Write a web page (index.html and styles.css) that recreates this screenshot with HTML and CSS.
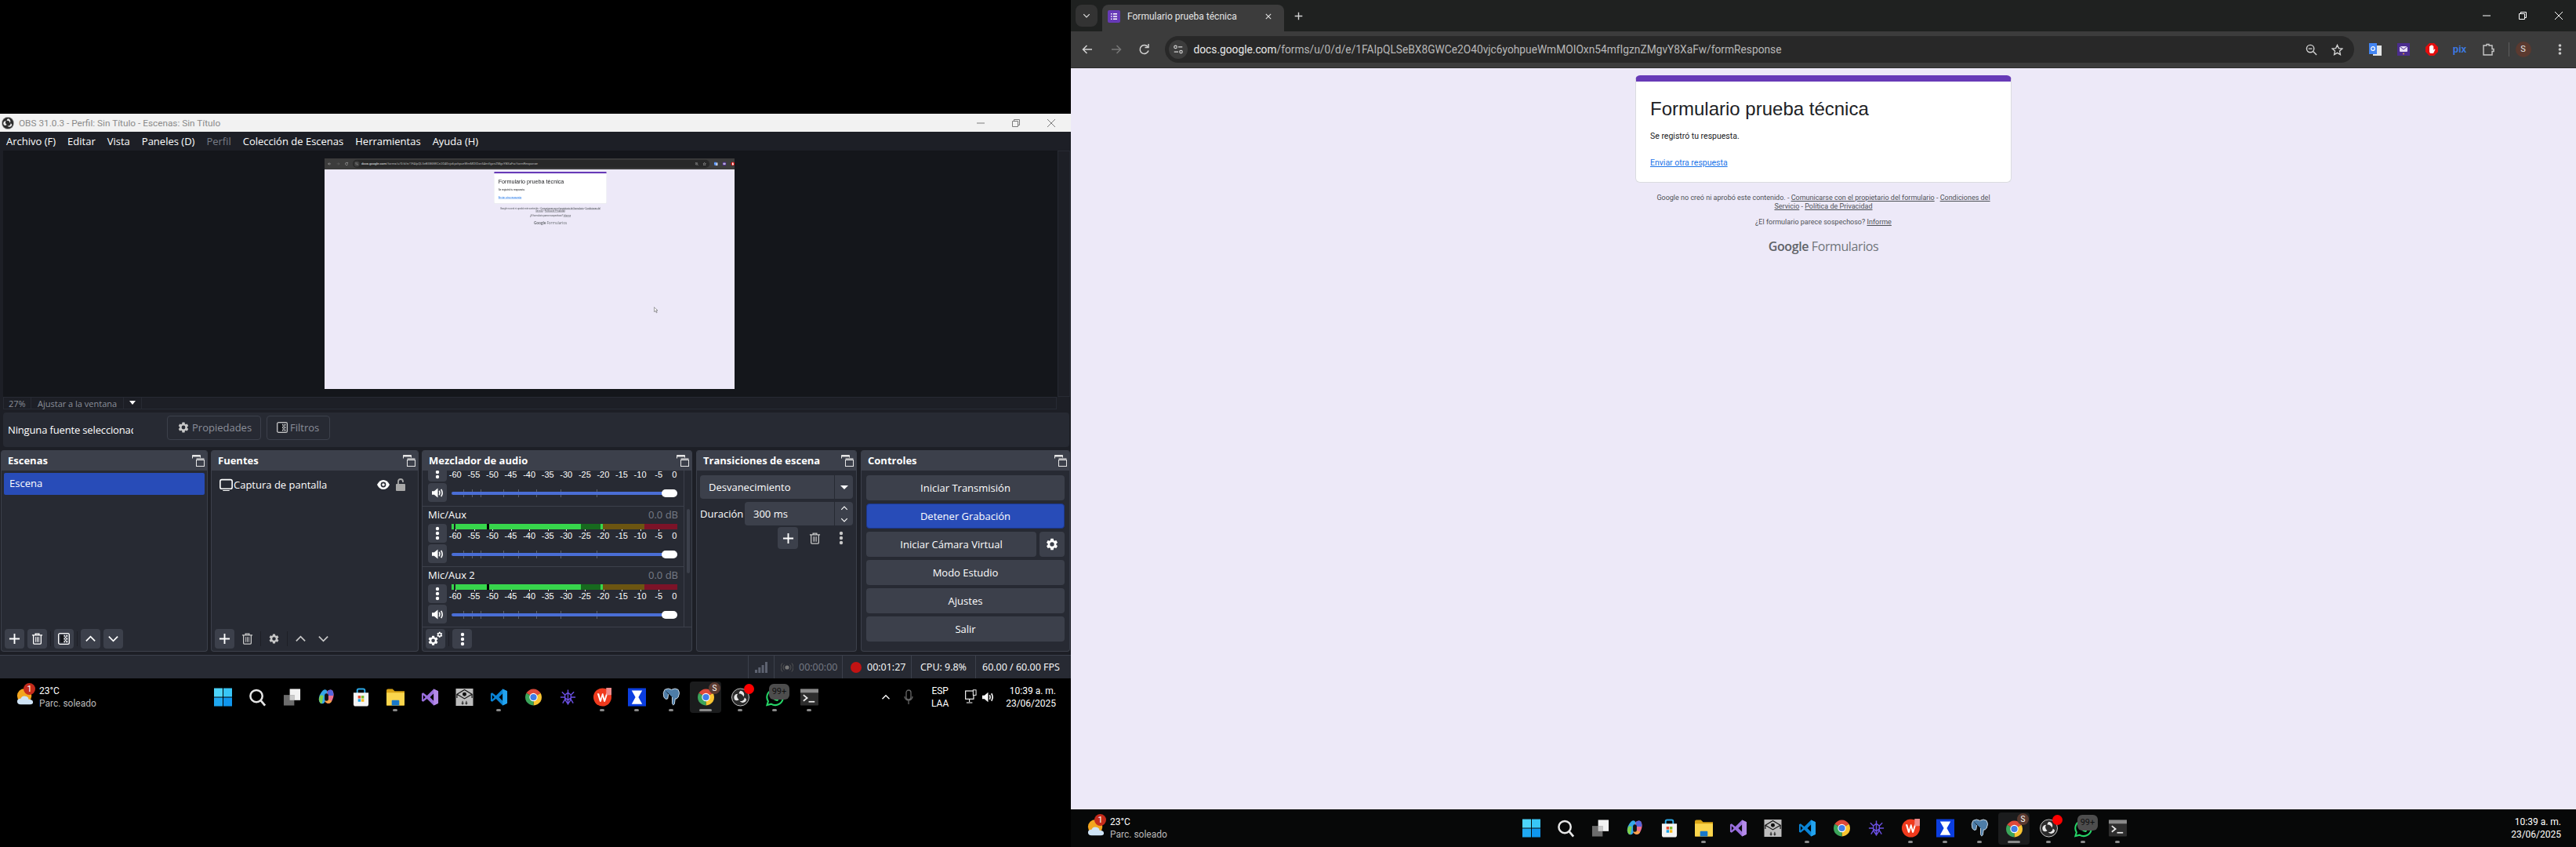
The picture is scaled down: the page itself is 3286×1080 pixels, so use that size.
FILE: index.html
```html
<!DOCTYPE html>
<html lang="es">
<head>
  <meta charset="UTF-8" />
  <title>OBS y Formulario prueba técnica</title>
  <link rel="stylesheet" href="styles.css">
</head>
<body>
  <svg class="sprites" width="0" height="0">
    <symbol id="i-gear" viewBox="0 0 24 24"><path fill="currentColor" d="M19.14 12.94c.04-.3.06-.61.06-.94 0-.32-.02-.64-.07-.94l2.03-1.58a.49.49 0 0 0 .12-.61l-1.92-3.32a.49.49 0 0 0-.59-.22l-2.39.96c-.5-.38-1.03-.7-1.62-.94l-.36-2.54a.48.48 0 0 0-.48-.41h-3.84a.48.48 0 0 0-.47.41l-.36 2.54c-.59.24-1.13.57-1.62.94l-2.39-.96a.49.49 0 0 0-.59.22L2.74 8.87c-.12.21-.08.47.12.61l2.03 1.58c-.05.3-.09.63-.09.94s.02.64.07.94l-2.03 1.58a.49.49 0 0 0-.12.61l1.92 3.32c.12.22.37.29.59.22l2.39-.96c.5.38 1.03.7 1.62.94l.36 2.54c.05.24.24.41.48.41h3.84c.24 0 .44-.17.47-.41l.36-2.54c.59-.24 1.13-.56 1.62-.94l2.39.96c.22.08.47 0 .59-.22l1.92-3.32c.12-.22.07-.47-.12-.61l-2.01-1.58zM12 15.6A3.6 3.6 0 1 1 12 8.4a3.6 3.6 0 0 1 0 7.2z"/></symbol>
    <symbol id="i-dock" viewBox="0 0 16 16"><g fill="none" stroke="currentColor"><path d="M.5 5.5v-4h10v3"/><path d="M.5 2.5h10" stroke-width="2"/><rect x="5.5" y="7.5" width="10" height="8"/><path d="M5.5 5h10v3h-10z" fill="currentColor" stroke="none" opacity=".6"/></g></symbol>
    <symbol id="i-plus" viewBox="0 0 16 16"><path d="M8 1v14M1 8h14" stroke="currentColor" stroke-width="2"/></symbol>
    <symbol id="i-trash" viewBox="0 0 16 16"><g fill="none" stroke="currentColor" stroke-width="1.4"><path d="M1 3h14M5.5 3V1.2h5V3M2.8 3v10.8q0 1.2 1.2 1.2h8q1.2 0 1.2-1.2V3"/><path d="M6 5.5v7M8 5.5v7M10 5.5v7" stroke-width="1"/></g></symbol>
    <symbol id="i-filter" viewBox="0 0 16 16"><rect x=".7" y=".7" width="14.6" height="14.6" rx="2" fill="none" stroke="currentColor" stroke-width="1.4"/><path d="M3 3h5v10H3z" fill="#14161b"/><path d="M8 3h1.5v2H8zM9.5 5H11v2H9.5zM8 7h1.5v2H8zM9.5 9H11v2H9.5zM8 11h1.5v2H8zM11 3h2v2h-2zM11 7h2v2h-2zM11 11h2v2h-2z" fill="currentColor"/></symbol>
    <symbol id="i-up" viewBox="0 0 16 16"><path d="M2 11l6-6 6 6" fill="none" stroke="currentColor" stroke-width="1.8"/></symbol>
    <symbol id="i-down" viewBox="0 0 16 16"><path d="M2 5l6 6 6-6" fill="none" stroke="currentColor" stroke-width="1.8"/></symbol>
    <symbol id="i-dots" viewBox="0 0 6 18"><circle cx="3" cy="3" r="2.2" fill="currentColor"/><circle cx="3" cy="9" r="2.2" fill="currentColor"/><circle cx="3" cy="15" r="2.2" fill="currentColor"/></symbol>
    <symbol id="i-speaker" viewBox="0 0 18 16"><path d="M1 5.5h3L9 1.5v13l-5-4H1z" fill="currentColor"/><path d="M11 5q1.6 3 0 6M13.5 3q3 5 0 10" fill="none" stroke="currentColor" stroke-width="1.7"/></symbol>
    <symbol id="i-gears" viewBox="0 0 24 24"><g transform="translate(0 6) scale(.72)"><use href="#i-gear"/></g><g transform="translate(13 1) scale(.42)"><use href="#i-gear"/></g></symbol>
    <symbol id="i-slider" viewBox="0 0 288 14"><path d="M15.500 2v10M26.500 2v10M37.500 2v10M66.500 2v10M85.500 2v10M108.500 2v10M139.500 2v10M185.500 2v10" stroke="#5d6270"/><rect y="5" width="288" height="4" rx="2" fill="#4a6ed6"/><rect x="268" y="2" width="20" height="10" rx="5" fill="#fff"/></symbol>
    <symbol id="i-obs" viewBox="0 0 24 24"><circle cx="12" cy="12" r="11.500" fill="#2b2b2b" stroke="#c9c9c9"/><path d="M12 3.500a5 5 0 0 1 4 8 5 5 0 0 0-6-4 4.500 4.500 0 0 1 2-4zM20 15.500a5 5 0 0 1-9 1.500 5 5 0 0 0 6.500-4.500 4.500 4.500 0 0 1 2.500 3zM4 15a5 5 0 0 1 4.500-7.500A5 5 0 0 0 10 15a4.500 4.500 0 0 1-6 0z" fill="#e8e8e8"/></symbol>
    <symbol id="i-win" viewBox="0 0 24 24"><path d="M0 0h11.500v11.500H0z" fill="#4dd4fb"/><path d="M12.500 0H24v11.500H12.500z" fill="#38c6f8"/><path d="M0 12.500h11.500V24H0z" fill="#1fa8f2"/><path d="M12.500 12.500H24V24H12.500z" fill="#0f96ee"/></symbol>
    <symbol id="i-search" viewBox="0 0 24 24"><circle cx="10.500" cy="10.500" r="8" fill="none" stroke="#e6e6e6" stroke-width="2.600"/><path d="M16.500 16.500L22 23" stroke="#e6e6e6" stroke-width="2.800"/></symbol>
    <symbol id="i-tasks" viewBox="0 0 24 24"><rect x="9" y="1" width="14" height="15" fill="#f2f2f2"/><rect x="1" y="9" width="14" height="14" fill="#6c6c6c"/><rect x="9" y="9" width="6" height="7" fill="#c9c9c9"/></symbol>
    <symbol id="i-copilot" viewBox="0 0 24 24"><path d="M7 3q4-3 6 1l-3 14q-2 4-6 2Q0 16 3 9q2-4 4-6z" fill="#35a7e8"/><path d="M4 20Q0 15 4 9l4 1-2 10z" fill="#7fd14a"/><path d="M13 4q3-3 7-1 3 5 0 12-2 5-5 5-2 1-5-2l3-14z" fill="#ee6f8f"/><path d="M13 4q4-3 7-1 2 4 1 7l-7 0z" fill="#5664dd"/><path d="M10 18q3 3 5 2 3 0 4-3l-6-3z" fill="#f8a14a"/><rect x="9.500" y="7" width="5" height="10" rx="2.400" fill="#111"/></symbol>
    <symbol id="i-store" viewBox="0 0 24 24"><path d="M7 7V3q0-2 2-2h6q2 0 2 2v4" fill="none" stroke="#2aa7e6" stroke-width="2"/><path d="M2 6h20v15q0 3-3 3H5q-3 0-3-3z" fill="#f4f4f4"/><path d="M8 10h3.600v3.600H8z" fill="#e8492f"/><path d="M12.400 10H16v3.600h-3.600z" fill="#7db927"/><path d="M8 14.400h3.600V18H8z" fill="#19a3ea"/><path d="M12.400 14.400H16V18h-3.600z" fill="#fbb917"/></symbol>
    <symbol id="i-folder" viewBox="0 0 24 24"><path d="M0 3q0-2 2-2h6l3 3h13v19H0z" fill="#d9a415"/><path d="M0 6h24v16q0 1-1 1H1q-1 0-1-1z" fill="#fbd64d"/><path d="M7 17q0-1 1-1h8q1 0 1 1v6H7z" fill="#1878c9"/></symbol>
    <symbol id="i-vs" viewBox="0 0 24 24"><path d="M17 1l6 3v16l-6 3-9-9-5 4-2-1V7l2-1 5 4zM17 7l-5 5 5 5zM3 9v6l3-3z" fill="#9a6fdd"/><path d="M17 1l6 3v16l-6 3z" fill="#b48ae8"/></symbol>
    <symbol id="i-iis" viewBox="0 0 24 24"><rect x=".5" y=".5" width="23" height="23" fill="#bdbdbd"/><path d="M2 8l10-6 10 6-10 6zM2 8v5M22 8v5" fill="none" stroke="#111" stroke-width="1.200"/><circle cx="12" cy="8" r="2.600" fill="#111"/><path d="M8 20h3M13 20h3M9.500 17v5M14.500 17v5" stroke="#111"/></symbol>
    <symbol id="i-vscode" viewBox="0 0 24 24"><path d="M17 1l6 3v16l-6 3-9-9-5 4-2-1V7l2-1 5 4z" fill="#0a84d6"/><path d="M17 7l-5 5 5 5zM3 9v6l3-3z" fill="#000"/><path d="M17 1l6 3v16l-6 3z" fill="#23a3ee"/></symbol>
    <symbol id="i-chrome" viewBox="0 0 24 24"><path d="M12 12L2.500 6.500A11 11 0 0 1 21.500 6.500z" fill="#de4a3a"/><path d="M12 12l9.500-5.500A11 11 0 0 1 12 23z" fill="#fbc531"/><path d="M12 12v11A11 11 0 0 1 2.500 6.500z" fill="#3ba55a"/><circle cx="12" cy="12" r="5.400" fill="#fff"/><circle cx="12" cy="12" r="4.300" fill="#3f7de8"/></symbol>
    <symbol id="i-net" viewBox="0 0 24 24"><g fill="none" stroke="#6a4fe0" stroke-width="1.500"><path d="M12 2v20M4 5l4 4 4-3 4 3 4-4M2 12h5l5 4 5-4h5M5 20l3-5 4 6 4-6 3 5M8 9v6M16 9v6"/></g></symbol>
    <symbol id="i-wps" viewBox="0 0 24 24"><circle cx="12" cy="12" r="12" fill="#ef3a1d"/><path d="M5 7h2.500l2 7 2-7h1.400l2 7 2-7H19l-3.400 11h-1.800L12 11.500 10.200 18H8.400z" fill="#fff"/><rect x="17" y="-1" width="8" height="10" rx="1" fill="#f08a8a"/></symbol>
    <symbol id="i-hourglass" viewBox="0 0 24 24"><rect width="24" height="24" fill="#0b3ee0"/><path d="M5 3h14l-5 9 5 9H5l5-9z" fill="#fff"/></symbol>
    <symbol id="i-pg" viewBox="0 0 24 24"><path d="M3 2q5-3 9 0 5-3 9 0 3 4 0 10-2 3-4 2l-1 7q-2 3-3-1V12M3 2q-3 4-1 10 2 4 5 2l1-6" fill="#4d7da8" stroke="#cfdbe6" stroke-width="1"/></symbol>
    <symbol id="i-wa" viewBox="0 0 24 24"><path d="M12 1.500a10.500 10.500 0 0 0-9 16L1.500 22.500 7 21A10.500 10.500 0 1 0 12 1.500z" fill="#000" stroke="#25d366" stroke-width="2.200"/><path d="M8 7q-2 3 1 7 4 4 7 3l1-2-3-2-1 1q-3-1-4-4l1-1-1-3z" fill="#25d366"/></symbol>
    <symbol id="i-term" viewBox="0 0 24 24"><rect y="1" width="24" height="22" rx="1" fill="#2e2e2e"/><rect y="1" width="24" height="5" fill="#8a8a8a"/><path d="M4 9l5 4-5 4" fill="none" stroke="#e8e8e8" stroke-width="1.800"/><path d="M11 18h8" stroke="#e8e8e8" stroke-width="1.800"/></symbol>
    <symbol id="i-weather" viewBox="0 0 24 24"><circle cx="11" cy="10" r="10" fill="#f3a51f"/><path d="M6 22q-5 0-5-4t5-4q2-5 8-3 3 1 3 4 6 0 6 4 0 3-4 3z" fill="#cfe3f5"/></symbol>
    <symbol id="i-back" viewBox="0 0 16 16"><path d="M14 8H2.500M7.500 3l-5 5 5 5" fill="none" stroke="currentColor" stroke-width="1.500"/></symbol>
    <symbol id="i-forward" viewBox="0 0 16 16"><path d="M2 8h11.500M8.500 3l5 5-5 5" fill="none" stroke="currentColor" stroke-width="1.500"/></symbol>
    <symbol id="i-reload" viewBox="0 0 16 16"><path d="M13 9.500A5.500 5.500 0 1 1 12 4.500" fill="none" stroke="currentColor" stroke-width="1.500"/><path d="M13 1v4.500H8.500" fill="none" stroke="currentColor" stroke-width="1.500"/></symbol>
    <symbol id="i-tune" viewBox="0 0 16 16"><g fill="none" stroke="currentColor" stroke-width="1.300"><circle cx="4" cy="4.500" r="2"/><path d="M8 4.500h6M2 11.500h6"/><circle cx="12" cy="11.500" r="2"/></g></symbol>
    <symbol id="i-zoomout" viewBox="0 0 16 16"><circle cx="6.500" cy="6.500" r="5" fill="none" stroke="currentColor" stroke-width="1.500"/><path d="M10.500 10.500L15 15M4 6.500h5" stroke="currentColor" stroke-width="1.500"/></symbol>
    <symbol id="i-star" viewBox="0 0 16 16"><path d="M8 1.500l2 4.500 4.800.5-3.600 3.200 1 4.800L8 12.100l-4.200 2.400 1-4.800L1.200 6.500 6 6z" fill="none" stroke="currentColor" stroke-width="1.400"/></symbol>
    <symbol id="i-translate" viewBox="0 0 16 16"><rect x="5" y="3" width="11" height="13" fill="#e4e6e8"/><rect width="10" height="14" fill="#4285f4"/><circle cx="5" cy="7" r="2.300" fill="none" stroke="#fff" stroke-width="1.200"/></symbol>
    <symbol id="i-mail" viewBox="0 0 16 16"><rect width="16" height="16" fill="#4b2d8f"/><rect x="3" y="4" width="10" height="7" rx="1" fill="#e8e0f8"/><path d="M3 4l5 4 5-4" fill="none" stroke="#4b2d8f"/><circle cx="8" cy="13.500" r="1" fill="#d89a35"/></symbol>
    <symbol id="i-hand" viewBox="0 0 16 16"><path d="M5 0h6l5 5v6l-5 5H5l-5-5V5z" fill="#e40d0d"/><path d="M5 7V4h1v3-4h1.500v4-4.500H9V7V3.500h1.300V9l1.200-1.500 1 .6L10 13H6L5 11z" fill="#fff"/></symbol>
    <symbol id="i-ext" viewBox="0 0 16 16"><path d="M2 3h4V1.500h3V3h4v4.500h2v3h-2V15H2z" fill="none" stroke="currentColor" stroke-width="1.400"/></symbol>
    <symbol id="i-forms" viewBox="0 0 16 16"><rect width="16" height="16" rx="2" fill="#673ab7"/><path d="M4 4h1.500v1.500H4zM7 4h5v1.500H7zM4 7.300h1.500v1.500H4zM7 7.300h5v1.500H7zM4 10.500h1.500V12H4zM7 10.500h5V12H7z" fill="#fff"/></symbol>
  </svg>

  <section class="screen screen-left">
    <div class="obs">
      <div class="obs-title">
        <svg class="obs-logo"><use href="#i-obs"/></svg>
        <span class="obs-title-text">OBS 31.0.3 - Perfil: Sin Título - Escenas: Sin Título</span>
        <span class="wincontrols wincontrols-light">
          <svg viewBox="0 0 10 10"><path d="M0 5h10" stroke="currentColor"/></svg>
          <svg viewBox="0 0 10 10"><path d="M.5 2.500h7v7h-7zM2.500 2.500V.5h7v7h-2" fill="none" stroke="currentColor"/></svg>
          <svg viewBox="0 0 10 10"><path d="M0 0l10 10M10 0L0 10" stroke="currentColor"/></svg>
        </span>
      </div>
      <nav class="obs-menu">
        <span>Archivo (F)</span><span>Editar</span><span>Vista</span><span>Paneles (D)</span><span class="off">Perfil</span><span>Colección de Escenas</span><span>Herramientas</span><span>Ayuda (H)</span>
      </nav>

      <div class="preview-row">
        <div class="preview">
          <div class="capture">
            <div class="capture-inner">
              <div class="toolbar">
                <svg class="nav-btn"><use href="#i-back"/></svg>
                <svg class="nav-btn dim"><use href="#i-forward"/></svg>
                <svg class="nav-btn"><use href="#i-reload"/></svg>
                <div class="omnibox">
                  <span class="site-chip"><svg><use href="#i-tune"/></svg></span>
                  <span class="url">docs.google.com<em>/forms/u/0/d/e/1FAIpQLSeBX8GWCe2O40vjc6yohpueWmMOIOxn54mfIgznZMgvY8XaFw/formResponse</em></span>
                  <svg class="omni-icon"><use href="#i-zoomout"/></svg>
                  <svg class="omni-icon"><use href="#i-star"/></svg>
                </div>
                <span class="ext"><svg><use href="#i-translate"/></svg></span>
                <span class="ext"><svg><use href="#i-mail"/></svg></span>
                <span class="ext"><svg><use href="#i-hand"/></svg></span>
              </div>
              <div class="form-page">
                <div class="form-card">
                  <h1>Formulario prueba técnica</h1>
                  <p>Se registró tu respuesta.</p>
                  <a>Enviar otra respuesta</a>
                </div>
                <p class="form-legal">Google no creó ni aprobó este contenido. - <u>Comunicarse con el propietario del formulario</u> - <u>Condiciones del</u> <u>Servicio</u> - <u>Política de Privacidad</u></p>
                <p class="form-legal form-report">¿El formulario parece sospechoso? <u>Informe</u></p>
                <div class="form-brand"><b>Google</b> Formularios</div>
              </div>
            </div>
            <svg class="capture-cursor" viewBox="0 0 6 10"><path d="M.5.5v7l2-1.500 1.500 3 1-.5-1.500-3h2.500z" fill="#fff" stroke="#444" stroke-width=".6"/></svg>
          </div>
        </div>
        <div class="preview-scroll"></div>
      </div>
      <div class="zoombar">
        <span class="zoom-val">27%</span>
        <span class="zoom-mode">Ajustar a la ventana</span>
        <span class="zoom-arrow"></span>
      </div>

      <div class="sourcebar">
        <span class="sourcebar-name">Ninguna fuente seleccionada</span>
        <span class="ghost-btn ghost-props"><svg><use href="#i-gear"/></svg>Propiedades</span>
        <span class="ghost-btn"><svg class="small"><use href="#i-filter"/></svg>Filtros</span>
      </div>

      <div class="docks">
        <div class="dock dock-scenes">
          <div class="dock-head">Escenas<svg><use href="#i-dock"/></svg></div>
          <div class="dock-body">
            <div class="scene-item">Escena</div>
          </div>
          <div class="dock-tools">
            <span class="tool"><svg><use href="#i-plus"/></svg></span>
            <span class="tool"><svg><use href="#i-trash"/></svg></span>
            <span class="tool-sep"></span>
            <span class="tool"><svg><use href="#i-filter"/></svg></span>
            <span class="tool-sep"></span>
            <span class="tool"><svg><use href="#i-up"/></svg></span>
            <span class="tool"><svg><use href="#i-down"/></svg></span>
          </div>
        </div>

        <div class="dock dock-sources">
          <div class="dock-head">Fuentes<svg><use href="#i-dock"/></svg></div>
          <div class="dock-body">
            <div class="source-item">
              <svg class="source-monitor" viewBox="0 0 16 16"><rect x=".8" y="1.500" width="14.400" height="11" rx="2" fill="none" stroke="currentColor" stroke-width="1.500"/><path d="M4 14.500h8" stroke="currentColor"/></svg>
              <span>Captura de pantalla</span>
              <svg class="source-eye" viewBox="0 0 16 12"><path d="M0 6q3-6 8-6t8 6q-3 6-8 6T0 6z" fill="#fff"/><circle cx="8" cy="6" r="3.400" fill="#272a33"/><circle cx="8" cy="6" r="1.800" fill="#fff"/></svg>
              <svg class="source-lock" viewBox="0 0 12 16"><path d="M3 7V4q0-3 3-3t3 3v1" fill="none" stroke="#a8a8a8" stroke-width="1.800"/><rect y="7" width="12" height="9" rx="1" fill="#a8a8a8"/></svg>
            </div>
          </div>
          <div class="dock-tools">
            <span class="tool"><svg><use href="#i-plus"/></svg></span>
            <span class="tool flat"><svg><use href="#i-trash"/></svg></span>
            <span class="tool-sep"></span>
            <span class="tool flat"><svg><use href="#i-gear"/></svg></span>
            <span class="tool-sep"></span>
            <span class="tool flat"><svg><use href="#i-up"/></svg></span>
            <span class="tool flat"><svg><use href="#i-down"/></svg></span>
          </div>
        </div>

        <div class="dock dock-mixer">
          <div class="dock-head">Mezclador de audio<svg><use href="#i-dock"/></svg></div>
          <div class="mixer-view">
            <div class="mixer-list">
              <div class="channel">
                <div class="channel-name"></div>
                <div class="channel-grid">
                  <div class="channel-btns">
                    <span class="mini-btn"><svg class="dots"><use href="#i-dots"/></svg></span>
                    <span class="mini-btn"><svg class="spk"><use href="#i-speaker"/></svg></span>
                  </div>
                  <div class="channel-meter">
                    <div class="meter meter-idle"></div>
                    <div class="scale"><span>-60</span><span>-55</span><span>-50</span><span>-45</span><span>-40</span><span>-35</span><span>-30</span><span>-25</span><span>-20</span><span>-15</span><span>-10</span><span>-5</span><span>0</span></div>
                    <svg class="slider"><use href="#i-slider"/></svg>
                  </div>
                </div>
              </div>
              <div class="channel">
                <div class="channel-name"><span>Mic/Aux</span><span class="db">0.0 dB</span></div>
                <div class="channel-grid">
                  <div class="channel-btns">
                    <span class="mini-btn"><svg class="dots"><use href="#i-dots"/></svg></span>
                    <span class="mini-btn"><svg class="spk"><use href="#i-speaker"/></svg></span>
                  </div>
                  <div class="channel-meter">
                    <div class="meter meter-live"></div>
                    <div class="scale"><span>-60</span><span>-55</span><span>-50</span><span>-45</span><span>-40</span><span>-35</span><span>-30</span><span>-25</span><span>-20</span><span>-15</span><span>-10</span><span>-5</span><span>0</span></div>
                    <svg class="slider"><use href="#i-slider"/></svg>
                  </div>
                </div>
              </div>
              <div class="channel">
                <div class="channel-name"><span>Mic/Aux 2</span><span class="db">0.0 dB</span></div>
                <div class="channel-grid">
                  <div class="channel-btns">
                    <span class="mini-btn"><svg class="dots"><use href="#i-dots"/></svg></span>
                    <span class="mini-btn"><svg class="spk"><use href="#i-speaker"/></svg></span>
                  </div>
                  <div class="channel-meter">
                    <div class="meter meter-live"></div>
                    <div class="scale"><span>-60</span><span>-55</span><span>-50</span><span>-45</span><span>-40</span><span>-35</span><span>-30</span><span>-25</span><span>-20</span><span>-15</span><span>-10</span><span>-5</span><span>0</span></div>
                    <svg class="slider"><use href="#i-slider"/></svg>
                  </div>
                </div>
              </div>
            </div>
            <div class="mixer-scroll"><div class="mixer-thumb"></div></div>
          </div>
          <div class="dock-tools mixer-tools">
            <span class="tool"><svg><use href="#i-gears"/></svg></span>
            <span class="tool-sep"></span>
            <span class="tool"><svg class="dots"><use href="#i-dots"/></svg></span>
          </div>
        </div>

        <div class="dock dock-trans">
          <div class="dock-head">Transiciones de escena<svg><use href="#i-dock"/></svg></div>
          <div class="trans-body">
            <div class="combo"><span>Desvanecimiento</span><span class="combo-arrow"><i></i></span></div>
            <div class="duration">
              <label>Duración</label>
              <div class="spin">
                <span>300 ms</span>
                <span class="spin-arrows"><svg><use href="#i-up"/></svg><svg><use href="#i-down"/></svg></span>
              </div>
            </div>
            <div class="trans-tools">
              <span class="tool wide"><svg><use href="#i-plus"/></svg></span>
              <span class="tool wide flat"><svg><use href="#i-trash"/></svg></span>
              <span class="tool wide flat"><svg class="dots"><use href="#i-dots"/></svg></span>
            </div>
          </div>
        </div>

        <div class="dock dock-controls">
          <div class="dock-head">Controles<svg><use href="#i-dock"/></svg></div>
          <div class="controls-body">
            <div class="ctl">Iniciar Transmisión</div>
            <div class="ctl ctl-on">Detener Grabación</div>
            <div class="ctl-row">
              <div class="ctl">Iniciar Cámara Virtual</div>
              <div class="ctl ctl-gear"><svg><use href="#i-gear"/></svg></div>
            </div>
            <div class="ctl">Modo Estudio</div>
            <div class="ctl">Ajustes</div>
            <div class="ctl">Salir</div>
          </div>
        </div>
      </div>

      <div class="status">
        <span class="st st-signal">
          <svg viewBox="0 0 16 14"><path d="M0 10h3v4H0zM4.300 7h3v7h-3zM8.600 4h3v10h-3zM13 0h3v14h-3z" fill="#5d6270"/></svg>
        </span>
        <span class="st st-live">
          <svg viewBox="0 0 16 12"><circle cx="8" cy="6" r="2.600" fill="#777"/><path d="M4.500 2.500a5 5 0 0 0 0 7M11.500 2.500a5 5 0 0 1 0 7M2 .5a8.500 8.500 0 0 0 0 11M14 .5a8.500 8.500 0 0 1 0 11" fill="none" stroke="#555"/></svg>
          00:00:00
        </span>
        <span class="st st-rec"><i></i>00:01:27</span>
        <span class="st st-cpu">CPU: 9.8%</span>
        <span class="st st-fps">60.00 / 60.00 FPS</span>
      </div>
    </div>

    <footer class="taskbar taskbar-left">
      <div class="weather">
        <span class="weather-icon"><svg><use href="#i-weather"/></svg><b>1</b></span>
        <span class="weather-text"><span>23°C</span><small>Parc. soleado</small></span>
      </div>
      <div class="apps">
        <span class="app"><svg><use href="#i-win"/></svg></span>
        <span class="app"><svg><use href="#i-search"/></svg></span>
        <span class="app"><svg><use href="#i-tasks"/></svg></span>
        <span class="app"><svg><use href="#i-copilot"/></svg></span>
        <span class="app"><svg><use href="#i-store"/></svg></span>
        <span class="app open"><svg><use href="#i-folder"/></svg></span>
        <span class="app"><svg><use href="#i-vs"/></svg></span>
        <span class="app"><svg><use href="#i-iis"/></svg></span>
        <span class="app open"><svg><use href="#i-vscode"/></svg></span>
        <span class="app"><svg><use href="#i-chrome"/></svg></span>
        <span class="app"><svg><use href="#i-net"/></svg></span>
        <span class="app open"><svg><use href="#i-wps"/></svg></span>
        <span class="app open"><svg><use href="#i-hourglass"/></svg></span>
        <span class="app open"><svg><use href="#i-pg"/></svg></span>
        <span class="app active"><svg><use href="#i-chrome"/></svg><b class="badge-s">S</b></span>
        <span class="app open"><svg><use href="#i-obs"/></svg><b class="badge-red"></b></span>
        <span class="app open"><svg><use href="#i-wa"/></svg><b class="badge-99">99+</b></span>
        <span class="app open"><svg><use href="#i-term"/></svg></span>
      </div>
      <div class="tray">
        <svg class="tray-chevron"><use href="#i-up"/></svg>
        <svg class="tray-mic" viewBox="0 0 12 20"><rect x="3" y="1" width="6" height="12" rx="3" fill="none" stroke="#666" stroke-width="1.300"/><path d="M1 9a5 5 0 0 0 10 0M6 14v5" fill="none" stroke="#666" stroke-width="1.300"/></svg>
        <span class="tray-lang">ESP<br>LAA</span>
        <svg class="tray-net" viewBox="0 0 16 20"><rect x=".7" y="2" width="11" height="11" fill="none" stroke="#fff" stroke-width="1.200"/><rect x="11" y=".7" width="4" height="7" fill="#000" stroke="#fff" stroke-width="1"/><path d="M6 13v4M2 18h8" stroke="#fff" stroke-width="1.200"/></svg>
        <svg class="tray-vol"><use href="#i-speaker"/></svg>
        <span class="clock"><span>10:39 a. m.</span><span>23/06/2025</span></span>
      </div>
    </footer>
  </section>

  <section class="screen screen-right">
    <div class="tabstrip">
      <span class="tab-search"><svg><use href="#i-down"/></svg></span>
      <div class="tab">
        <svg class="tab-icon"><use href="#i-forms"/></svg>
        <span class="tab-title">Formulario prueba técnica</span>
        <svg class="tab-close" viewBox="0 0 10 10"><path d="M1 1l8 8M9 1L1 9" stroke="currentColor" stroke-width="1.300"/></svg>
      </div>
      <svg class="tab-new"><use href="#i-plus"/></svg>
      <span class="wincontrols">
        <svg viewBox="0 0 10 10"><path d="M0 5h10" stroke="currentColor"/></svg>
        <svg viewBox="0 0 10 10"><path d="M.5 2.500h7v7h-7zM2.500 2.500V.5h7v7h-2" fill="none" stroke="currentColor"/></svg>
        <svg viewBox="0 0 10 10"><path d="M0 0l10 10M10 0L0 10" stroke="currentColor"/></svg>
      </span>
    </div>
    <div class="toolbar">
      <svg class="nav-btn"><use href="#i-back"/></svg>
      <svg class="nav-btn dim"><use href="#i-forward"/></svg>
      <svg class="nav-btn"><use href="#i-reload"/></svg>
      <div class="omnibox">
        <span class="site-chip"><svg><use href="#i-tune"/></svg></span>
        <span class="url">docs.google.com<em>/forms/u/0/d/e/1FAIpQLSeBX8GWCe2O40vjc6yohpueWmMOIOxn54mfIgznZMgvY8XaFw/formResponse</em></span>
        <svg class="omni-icon"><use href="#i-zoomout"/></svg>
        <svg class="omni-icon"><use href="#i-star"/></svg>
      </div>
      <span class="ext"><svg><use href="#i-translate"/></svg></span>
      <span class="ext"><svg><use href="#i-mail"/></svg></span>
      <span class="ext"><svg><use href="#i-hand"/></svg></span>
      <span class="ext pix">pix</span>
      <span class="ext"><svg class="ext-puzzle"><use href="#i-ext"/></svg></span>
      <span class="toolbar-sep"></span>
      <span class="avatar">S</span>
      <svg class="kebab"><use href="#i-dots"/></svg>
    </div>
    <div class="form-page">
      <div class="form-card">
        <h1>Formulario prueba técnica</h1>
        <p>Se registró tu respuesta.</p>
        <a>Enviar otra respuesta</a>
      </div>
      <p class="form-legal">Google no creó ni aprobó este contenido. - <u>Comunicarse con el propietario del formulario</u> - <u>Condiciones del</u> <u>Servicio</u> - <u>Política de Privacidad</u></p>
      <p class="form-legal form-report">¿El formulario parece sospechoso? <u>Informe</u></p>
      <div class="form-brand"><b>Google</b> Formularios</div>
    </div>
    <footer class="taskbar taskbar-right">
      <div class="weather">
        <span class="weather-icon"><svg><use href="#i-weather"/></svg><b>1</b></span>
        <span class="weather-text"><span>23°C</span><small>Parc. soleado</small></span>
      </div>
      <div class="apps">
        <span class="app"><svg><use href="#i-win"/></svg></span>
        <span class="app"><svg><use href="#i-search"/></svg></span>
        <span class="app"><svg><use href="#i-tasks"/></svg></span>
        <span class="app"><svg><use href="#i-copilot"/></svg></span>
        <span class="app"><svg><use href="#i-store"/></svg></span>
        <span class="app open"><svg><use href="#i-folder"/></svg></span>
        <span class="app"><svg><use href="#i-vs"/></svg></span>
        <span class="app"><svg><use href="#i-iis"/></svg></span>
        <span class="app open"><svg><use href="#i-vscode"/></svg></span>
        <span class="app"><svg><use href="#i-chrome"/></svg></span>
        <span class="app"><svg><use href="#i-net"/></svg></span>
        <span class="app open"><svg><use href="#i-wps"/></svg></span>
        <span class="app open"><svg><use href="#i-hourglass"/></svg></span>
        <span class="app open"><svg><use href="#i-pg"/></svg></span>
        <span class="app active"><svg><use href="#i-chrome"/></svg><b class="badge-s">S</b></span>
        <span class="app open"><svg><use href="#i-obs"/></svg><b class="badge-red"></b></span>
        <span class="app open"><svg><use href="#i-wa"/></svg><b class="badge-99">99+</b></span>
        <span class="app open"><svg><use href="#i-term"/></svg></span>
      </div>
      <div class="tray">
        <span class="clock"><span>10:39 a. m.</span><span>23/06/2025</span></span>
      </div>
    </footer>
  </section>
</body>
</html>
```

FILE: styles.css
```css
* {
  box-sizing: border-box;
}

html,
body {
  margin: 0;
  height: 1080px;
  overflow: hidden;
  background: #000;
}

body {
  display: flex;
  font-family: "Open Sans", sans-serif;
}

.sprites {
  position: absolute;
}

svg {
  display: block;
  flex: none;
}

.screen {
  height: 1080px;
  display: flex;
  flex-direction: column;
}

.screen-left {
  width: 1366px;
  padding-top: 145px;
}

.screen-right {
  width: 1920px;
}

/* obs window */
.obs {
  height: 720px;
  display: flex;
  flex-direction: column;
  background: #1d1f26;
  color: #fff;
  font-size: 13px;
}

.obs-title {
  height: 23px;
  background: #f2f2f2;
  display: flex;
  align-items: center;
  padding-left: 2px;
  color: #8a8a8a;
  flex: none;
}

.obs-logo {
  width: 16px;
  height: 16px;
}

.obs-title-text {
  margin-left: 6px;
  font: 11.8px Roboto, sans-serif;
}

.wincontrols {
  margin-left: auto;
  display: flex;
  color: #fff;
  gap: 36px;
  padding-right: 17px;
}

.wincontrols svg {
  width: 10px;
  height: 10px;
}

.wincontrols-light {
  color: #7c7c7c;
  gap: 35px;
  padding-right: 20px;
}

.obs-menu {
  height: 24px;
  flex: none;
  display: flex;
  align-items: center;
  gap: 15px;
  padding-left: 8px;
}

.obs-menu .off {
  color: #787c87;
}

.preview-row {
  height: 314px;
  flex: none;
  display: flex;
  padding: 0 1px 0 4px;
}

.preview {
  flex: 1;
  background: #14161b;
  display: flex;
  align-items: center;
  justify-content: center;
}

.preview-scroll {
  width: 16px;
  border: 1px solid #272a33;
  background: #1d1f26;
}

.capture {
  width: 523px;
  height: 294px;
  margin-right: 2px;
  overflow: hidden;
  position: relative;
  background: #ede9f8;
}

.capture-inner {
  width: 1920px;
  height: 980px;
  transform: scale(0.3);
  transform-origin: 0 0;
}

.capture-cursor {
  position: absolute;
  left: 420px;
  top: 189px;
  width: 5px;
  height: 9px;
}

.zoombar {
  height: 16px;
  flex: none;
  margin: 0 18px 0 4px;
  border: 1px solid #272a33;
  background: #1d1f26;
  display: flex;
  align-items: center;
  color: #8b8f9a;
  font-size: 11px;
}

.zoom-val {
  width: 35px;
  padding-left: 6px;
  border-right: 1px solid #272a33;
}

.zoom-mode {
  width: 118px;
  padding-left: 8px;
  border-right: 1px solid #272a33;
  white-space: nowrap;
}

.zoom-arrow {
  width: 23px;
  height: 100%;
  border-right: 1px solid #272a33;
  position: relative;
}

.zoom-arrow::after {
  content: "";
  position: absolute;
  left: 7px;
  top: 4px;
  border: 4px solid transparent;
  border-top: 5px solid #fff;
  border-bottom: 0;
}

.sourcebar {
  height: 44px;
  flex: none;
  margin: 4px 2px 4px 4px;
  background: #272a33;
  border-radius: 4px;
  display: flex;
  align-items: center;
  padding-left: 6px;
}

.sourcebar-name {
  width: 160px;
  overflow: hidden;
  white-space: nowrap;
  margin-right: 43px;
  letter-spacing: -0.15px;
}

.ghost-btn {
  height: 31px;
  display: flex;
  align-items: center;
  gap: 3px;
  border: 1px solid #3c404b;
  border-radius: 4px;
  padding: 0 13px 0 12px;
  color: #8b8f9a;
  margin-top: -6px;
}

.ghost-props {
  width: 120px;
  margin-right: 7px;
}

.ghost-btn svg {
  width: 16px;
  height: 16px;
  color: #c8c8c8;
}

.ghost-btn .small {
  width: 14px;
  height: 14px;
}

/* docks */
.docks {
  height: 257px;
  flex: none;
  display: flex;
  padding-left: 1px;
}

.dock {
  display: flex;
  flex-direction: column;
  background: #272a33;
  border: 1px solid #3c404b;
  border-top: 0;
  border-radius: 4px;
  overflow: hidden;
}

.dock-scenes {
  width: 264px;
  margin-right: 4px;
}

.dock-sources {
  width: 265px;
  margin-right: 4px;
}

.dock-mixer {
  width: 345px;
  margin-right: 5px;
}

.dock-trans {
  width: 205px;
  margin-right: 5px;
}

.dock-controls {
  width: 267px;
}

.dock-head {
  height: 26px;
  flex: none;
  background: #3c404b;
  display: flex;
  align-items: center;
  justify-content: space-between;
  padding: 0 3px 0 8px;
  font-weight: 700;
}

.dock-head svg {
  width: 16px;
  height: 16px;
  color: #e6e6e6;
}

.dock-body {
  flex: 1;
  padding: 3px;
}

.scene-item {
  height: 28px;
  background: #284cb8;
  border-radius: 2px;
  padding-left: 7px;
  line-height: 26px;
  font-size: 13px;
}

.source-item {
  display: flex;
  align-items: center;
  height: 26px;
  padding-left: 7px;
  margin-top: 2px;
}

.source-monitor {
  width: 17px;
  height: 17px;
  margin-right: 1px;
}

.source-eye {
  width: 16px;
  height: 12px;
  margin-left: auto;
  margin-right: -3px;
}

.source-lock {
  width: 12px;
  height: 16px;
  margin: 0 13px 0 11px;
}

.dock-tools {
  height: 28px;
  flex: none;
  display: flex;
  align-items: flex-start;
  gap: 4px;
  padding-left: 4px;
}

.tool {
  width: 25px;
  height: 25px;
  border-radius: 4px;
  background: #3c404b;
  display: flex;
  align-items: center;
  justify-content: center;
}

.tool svg {
  width: 15px;
  height: 15px;
}

.tool.flat {
  background: none;
  color: #c8c8c8;
}

.tool-sep {
  width: 1px;
  height: 19px;
  margin: 3px 0 0;
  background: #1d1f26;
}

.tool svg.dots,
.mini-btn svg.dots {
  width: 6px;
  height: 18px;
}

/* mixer */
.mixer-view {
  height: 200px;
  flex: none;
  display: flex;
  overflow: hidden;
  border-bottom: 1px solid #3c404b;
}

.mixer-list {
  width: 333px;
  flex: none;
  margin-top: -32px;
}

.channel {
  height: 77px;
  border-top: 1px solid #3c404b;
  padding: 0 7px 0 7px;
}

.channel:first-child {
  border-top: 0;
}

.channel-name {
  height: 18px;
  display: flex;
  justify-content: space-between;
  align-items: center;
  margin-bottom: 4px;
  padding-top: 1px;
}

.db {
  color: #787c87;
}

.channel-grid {
  display: flex;
  gap: 6px;
}

.channel-btns {
  width: 24px;
  display: flex;
  flex-direction: column;
  gap: 2px;
}

.mini-btn {
  width: 24px;
  height: 24px;
  border-radius: 4px;
  background: #3c404b;
  display: flex;
  align-items: center;
  justify-content: center;
}

.mini-btn .spk {
  width: 17px;
  height: 15px;
}

.channel-meter {
  width: 288px;
}

.meter {
  height: 7px;
}

.meter-idle {
  background: linear-gradient(90deg, #176a1e 0 193px, #6c5511 193px 246px, #7c1328 246px);
}

.meter-live {
  background: linear-gradient(90deg, #37d64c 0 3px, #1d1f26 3px 5px, #37d64c 5px 45px, #000 45px 48px, #37d64c 48px 165px, #176a1e 165px 190px, #37d64c 190px 193px, #6c5511 193px 246px, #7c1328 246px);
}

.scale {
  height: 15px;
  margin-left: -7px;
  display: grid;
  grid-template-columns: repeat(13, 23.58px);
  color: #fff;
  font: 11px/16px "Liberation Sans Narrow", "Liberation Sans", sans-serif;
  text-align: center;
  background: repeating-linear-gradient(90deg, #fff 0 1px, transparent 1px 23.58px) 12px 0 / 100% 2px no-repeat;
}

.scale span:last-child {
  padding-right: 7px;
}

.slider {
  width: 288px;
  height: 14px;
  margin-top: 10px;
}

.mixer-scroll {
  flex: 1;
  border-left: 1px solid #3c404b;
  padding: 49px 2px 0 3px;
}

.mixer-thumb {
  height: 82px;
  border-radius: 3px;
  background: #3c404b;
}

.mixer-tools {
  padding-top: 2px;
  height: auto;
  padding-left: 4px;
  gap: 4px;
}

.mixer-tools svg {
  width: 21px;
  height: 21px;
}

.mixer-tools .tool-sep {
  margin: 3px 0 0;
}

/* transitions */
.trans-body {
  padding: 6px 4px;
}

.combo {
  height: 30px;
  background: #3c404b;
  border-radius: 4px;
  display: flex;
  align-items: center;
  justify-content: space-between;
  padding-left: 11px;
}

.combo-arrow {
  width: 24px;
  height: 100%;
  border-left: 1px solid #272a33;
  display: flex;
  align-items: center;
  justify-content: center;
}

.combo-arrow i {
  border: 5px solid transparent;
  border-top: 5px solid #fff;
  border-bottom: 0;
}

.duration {
  display: flex;
  align-items: center;
  justify-content: space-between;
  margin-top: 4px;
}

.spin {
  width: 138px;
  height: 30px;
  background: #3c404b;
  border-radius: 4px;
  display: flex;
  align-items: center;
  justify-content: space-between;
  padding-left: 11px;
}

.spin-arrows {
  width: 24px;
  height: 100%;
  border-left: 1px solid #272a33;
  display: flex;
  flex-direction: column;
  align-items: center;
  justify-content: space-around;
}

.spin-arrows svg {
  width: 10px;
  height: 10px;
}

.trans-tools {
  display: flex;
  justify-content: flex-end;
  align-items: center;
  gap: 8px;
  margin-top: 2px;
  padding-right: 2px;
}

.tool.wide {
  width: 26px;
  height: 28px;
}

/* controls */
.controls-body {
  padding: 6px 6px 0;
  display: flex;
  flex-direction: column;
  gap: 4px;
}

.ctl {
  height: 32px;
  flex: 1 0 32px;
  background: #3c404b;
  border-radius: 4px;
  display: flex;
  align-items: center;
  justify-content: center;
}

.ctl-on {
  background: #284cb8;
  border: 1px solid #1c378a;
}

.ctl-row {
  display: flex;
  gap: 4px;
}

.ctl-gear {
  flex: 0 0 32px;
}

.ctl-gear svg {
  width: 18px;
  height: 18px;
}

/* status bar */
.status {
  height: 30px;
  flex: none;
  margin-top: 4px;
  background: #272a33;
  border-top: 1px solid #3c404b;
  display: flex;
  justify-content: flex-end;
  align-items: stretch;
  font-size: 12.5px;
  padding-right: 0;
}

.st {
  display: flex;
  align-items: center;
  border-left: 1px solid #3c404b;
}

.st-signal {
  width: 33px;
  padding-left: 8px;
}

.st-signal svg {
  width: 16px;
  height: 14px;
}

.st-live {
  width: 87px;
  padding-left: 8px;
  gap: 7px;
  color: #787c87;
}

.st-live svg {
  width: 16px;
  height: 12px;
}

.st-rec {
  width: 88px;
  padding-left: 10px;
  gap: 7px;
}

.st-rec i {
  width: 14px;
  height: 14px;
  border-radius: 50%;
  background: #c21313;
}

.st-cpu {
  width: 82px;
  padding-left: 11px;
}

.st-fps {
  width: 122px;
  padding-left: 8px;
  white-space: nowrap;
}

/* taskbar */
.taskbar {
  display: flex;
  align-items: stretch;
  background: #000;
  color: #fff;
  font: 12px Roboto, sans-serif;
  flex: none;
}

.taskbar-left {
  height: 47px;
}

.taskbar-right {
  height: 48px;
  background: #070808;
}

.weather {
  display: flex;
  align-items: center;
  gap: 7px;
  padding-left: 21px;
  flex: none;
}

.taskbar-left .weather {
  width: 262px;
}

.taskbar-right .weather {
  width: 565px;
}

.weather-icon {
  position: relative;
  width: 22px;
  height: 24px;
}

.weather-icon svg {
  width: 22px;
  height: 24px;
}

.weather-icon b {
  position: absolute;
  left: 9px;
  top: -6px;
  width: 15px;
  height: 15px;
  border-radius: 50%;
  background: #c42b1c;
  font-weight: 400;
  font-size: 11px;
  line-height: 15px;
  text-align: center;
}

.weather-text {
  display: flex;
  flex-direction: column;
  gap: 2px;
  line-height: 14px;
}

.weather-text small {
  font-size: 12px;
  color: #b9b9b9;
}

.apps {
  display: flex;
}

.app {
  width: 44px;
  position: relative;
  display: flex;
  align-items: center;
  justify-content: center;
}

.app svg {
  width: 23px;
  height: 24px;
}

.app.open::after,
.app.active::after {
  content: "";
  position: absolute;
  left: 19px;
  bottom: 5px;
  width: 6px;
  height: 3px;
  border-radius: 2px;
  background: #8a8a8a;
}

.app.active {
  background: #1b1c1d;
  border-radius: 4px;
  margin: 4px 2px 3px;
  width: 40px;
}

.app.active::after {
  left: 12px;
  bottom: 2px;
  width: 16px;
}

.badge-s {
  position: absolute;
  right: 1px;
  top: 1px;
  width: 15px;
  height: 15px;
  border-radius: 50%;
  background: #5b3a30;
  font-weight: 400;
  font-size: 10px;
  line-height: 15px;
  text-align: center;
}

.badge-red {
  position: absolute;
  right: 4px;
  top: 7px;
  width: 13px;
  height: 13px;
  border-radius: 50%;
  background: #f00;
}

.badge-99 {
  position: absolute;
  left: 15px;
  top: 7px;
  width: 26px;
  height: 20px;
  border-radius: 6px;
  background: #4d4d4d;
  color: #111;
  font-weight: 400;
  font-size: 11px;
  line-height: 20px;
  text-align: center;
}

.tray {
  margin-left: auto;
  display: flex;
  align-items: center;
  padding-right: 19px;
}

.tray-chevron {
  width: 12px;
  height: 12px;
  margin-right: 17px;
}

.tray-mic {
  width: 12px;
  height: 20px;
  margin-right: 22px;
}

.tray-lang {
  width: 24px;
  text-align: center;
  line-height: 16px;
  margin-right: 20px;
}

.tray-net {
  width: 15px;
  height: 19px;
  margin-right: 6px;
}

.tray-vol {
  width: 17px;
  height: 16px;
  margin-right: 14px;
  color: #fff;
}

.clock {
  display: flex;
  flex-direction: column;
  align-items: flex-end;
  gap: 2px;
  line-height: 14px;
}

/* chrome */
.tabstrip {
  height: 40px;
  flex: none;
  background: #1f2120;
  display: flex;
  align-items: flex-end;
  padding-left: 6px;
}

.tab-search {
  width: 28px;
  height: 28px;
  border-radius: 8px;
  background: #333;
  color: #e6e6e6;
  margin-bottom: 6px;
  display: flex;
  align-items: center;
  justify-content: center;
}

.tab-search svg {
  width: 10px;
  height: 10px;
}

.tab {
  width: 232px;
  height: 34px;
  margin-left: 6px;
  background: #3c3c3c;
  border-radius: 8px 8px 0 0;
  display: flex;
  align-items: center;
  padding: 0 0 4px 7px;
  color: #e4e4e4;
}

.tab-icon {
  width: 16px;
  height: 16px;
}

.tab-title {
  margin-left: 9px;
  width: 176px;
  font: 12px Roboto, sans-serif;
  white-space: nowrap;
}

.tab-close {
  width: 8px;
  height: 8px;
  color: #e4e4e4;
}

.tab-new {
  width: 11px;
  height: 11px;
  margin: 0 0 14px 13px;
  color: #d4d4d4;
}

.tabstrip .wincontrols {
  align-self: center;
}

.toolbar {
  height: 47px;
  flex: none;
  background: #3c3c3c;
  border-bottom: 1px solid #2b2b2b;
  display: flex;
  align-items: center;
  padding-left: 13px;
  color: #d4d4d4;
}

.nav-btn {
  width: 16px;
  height: 16px;
  margin-right: 20.5px;
}

.nav-btn.dim {
  color: #777;
}

.omnibox {
  width: 1517px;
  height: 34px;
  margin: 0 9px 0 -3px;
  background: #282828;
  border-radius: 17px;
  display: flex;
  align-items: center;
  padding: 0 14px 0 5px;
  flex: none;
}

.site-chip {
  width: 24px;
  height: 24px;
  border-radius: 50%;
  background: #3c3c3c;
  display: flex;
  align-items: center;
  justify-content: center;
  margin-right: 8px;
}

.site-chip svg {
  width: 14px;
  height: 14px;
}

.url {
  font: 13.75px Roboto, sans-serif;
  color: #e8e8e8;
  white-space: nowrap;
}

.url em {
  font-style: normal;
  color: #b8b8b8;
}

.omni-icon {
  width: 15px;
  height: 15px;
  margin-left: 18px;
}

.url + .omni-icon {
  margin-left: auto;
}

.ext {
  width: 36px;
  display: flex;
  justify-content: center;
  flex: none;
}

.ext svg {
  width: 16px;
  height: 16px;
}

.ext .ext-puzzle {
  color: #c8c8c8;
}

.pix {
  font: 700 12px "Liberation Sans", sans-serif;
  color: #3d7de8;
}

.toolbar-sep {
  width: 1px;
  height: 18px;
  background: #5f5f5f;
  margin: 0 8px;
}

.avatar {
  width: 20px;
  height: 20px;
  border-radius: 50%;
  background: #5b3a30;
  font: 11px/20px Roboto, sans-serif;
  text-align: center;
  color: #e8e8e8;
  flex: none;
}

.kebab {
  width: 5px;
  height: 16px;
  margin-left: 34px;
  color: #c8c8c8;
}

/* google form */
.form-page {
  flex: 1;
  background: #ede9f8;
  display: flex;
  flex-direction: column;
  align-items: center;
  padding-top: 9px;
  color: #202124;
}

.form-card {
  width: 480px;
  height: 137px;
  background: #fff;
  border: 1px solid #dadce0;
  border-top: 8px solid #673ab7;
  border-radius: 6px;
  padding: 21px 18px 0;
  font: 10.5px Roboto, sans-serif;
}

.form-card h1 {
  margin: 0 0 14px;
  font: 400 24px/28px "Liberation Sans", sans-serif;
}

.form-card p {
  margin: 0 0 21px;
  line-height: 13px;
}

.form-card a {
  color: #1a73e8;
  text-decoration: underline;
  line-height: 13px;
  display: block;
}

.form-legal {
  width: 440px;
  margin: 14px 0 0;
  font: 9px/11px Roboto, sans-serif;
  color: #4d5156;
  text-align: center;
}

.form-report {
  margin-top: 9px;
}

.form-brand {
  margin-top: 15px;
  font: 16px/20px "Open Sans", sans-serif;
  color: #70757a;
  letter-spacing: -0.4px;
}

.form-brand b {
  font-weight: 600;
  color: #5f6368;
}
```
